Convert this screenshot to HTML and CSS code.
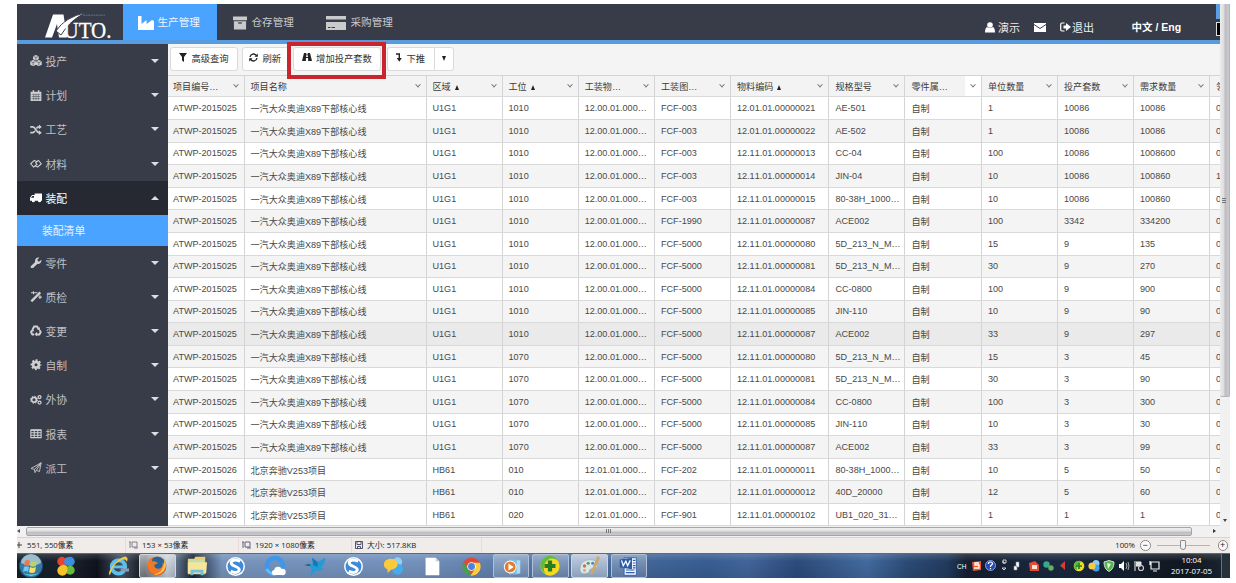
FILE: index.html
```html
<!DOCTYPE html>
<html lang="zh-CN">
<head>
<meta charset="utf-8">
<title>装配清单</title>
<link rel="stylesheet" href="styles.css">
</head>
<body>
<svg class="defs" width="0" height="0">
  <defs>
    <symbol id="i-cubes" viewBox="0 0 16 16"><path fill="currentColor" d="M7.800 0l4 1.600v4.400l-4 1.700-4-1.700V1.600z"/><path fill="currentColor" d="M4 7l4 1.700v4.800l-4 2-4-2V8.700zM12 7l4 1.700v4.800l-4 2-4-2V8.700z"/><path d="M4.300 2L7.800 3.400 11.300 2M7.800 3.400v3.400M.6 9.100L4 10.500l3.600-1.400M4 10.500v4.300M8.400 9.100L12 10.500l3.600-1.400M12 10.500v4.300" stroke="#383c49" stroke-width=".8" fill="none"/></symbol>
    <symbol id="i-cal" viewBox="0 0 16 16"><path fill="currentColor" d="M.5 2.500h2.800V.5h2.200v2h5V.5h2.200v2h2.800V15.500H.5z"/><path d="M2 6h12M2 9h12M2 12h12M4.800 6v8.500M8 6v8.500M11.200 6v8.500" stroke="#383c49" stroke-width=".7"/></symbol>
    <symbol id="i-random" viewBox="0 0 16 16"><path d="M0 4h3.500c3.500 0 5 8 8.500 8h1M0 12h3.500c1.300 0 2.200-1.200 3-2.500M8.500 6.300C9.400 5 10.400 4 12 4h1" stroke="currentColor" stroke-width="2.300" fill="none"/><path fill="currentColor" d="M12 .6L16 4l-4 3.400zM12 8.600L16 12l-4 3.400z"/></symbol>
    <symbol id="i-link" viewBox="0 0 18 16"><path d="M10.500 5L6.500 3 1 8l4.500 5 4-3.500M7.500 11l4 2L17 8l-4.500-5-4 3.500L11 10" stroke="currentColor" stroke-width="1.600" fill="none" stroke-linejoin="round"/></symbol>
    <symbol id="i-truck" viewBox="0 0 18 16"><path fill="currentColor" d="M7 1.500h11v11h-1.500a2.300 2.300 0 0 1-4.500 0H7.300a2.300 2.300 0 0 1-4.500 0H0V8l3-4h4z"/><path fill="#262931" d="M1.500 8L3.700 5.300H6V8z"/><circle cx="5" cy="13" r="1.900" fill="currentColor"/><circle cx="14.300" cy="13" r="1.900" fill="currentColor"/></symbol>
    <symbol id="i-wrench" viewBox="0 0 16 16"><path fill="currentColor" d="M.8 12.800l6-6C6 4 8 1 11.200.8l1.500.3L10 3.500l.4 2.300 2.300.6 2.700-2.600c.8 3.200-2 6.800-5.600 6l-6 5.600C2 16.500-.5 14.500.8 12.800z"/></symbol>
    <symbol id="i-magic" viewBox="0 0 16 16"><path d="M1.500 14.500L14 2" stroke="currentColor" stroke-width="3.200"/><path d="M1 2.500h7M4.500.5v4M13.500 6v5M11.500 8.500H16M8 2.500h2" stroke="currentColor" stroke-width="1.500"/></symbol>
    <symbol id="i-recycle" viewBox="0 0 16 16"><path d="M3.300 6L5.500 2h4l1.600 2.500M13.300 7l1.200 3-1.800 3.200H9M5.500 13.200H3L1.200 10l1.200-2.200" stroke="currentColor" stroke-width="2.700" fill="none"/><path fill="currentColor" d="M8.500 5.500L13.500 3v4.500zM9.500 9.500v6.500L6 13zM0 7.500l4-2.300 1.500 4z"/></symbol>
    <symbol id="i-cog" viewBox="0 0 16 16"><circle cx="8" cy="8" r="4" fill="none" stroke="currentColor" stroke-width="3.800"/><circle cx="8" cy="8" r="6.400" fill="none" stroke="currentColor" stroke-width="2.400" stroke-dasharray="2.700 2.330" stroke-dashoffset="1.350"/></symbol>
    <symbol id="i-cogs" viewBox="0 0 18 16"><circle cx="6" cy="8" r="3.600" fill="none" stroke="currentColor" stroke-width="2.600"/><circle cx="6" cy="8" r="5.300" fill="none" stroke="currentColor" stroke-width="1.500" stroke-dasharray="2.100 2.060"/><circle cx="14.300" cy="4" r="2.200" fill="none" stroke="currentColor" stroke-width="1.900"/><circle cx="14.300" cy="12.300" r="2.200" fill="none" stroke="currentColor" stroke-width="1.900"/></symbol>
    <symbol id="i-table" viewBox="0 0 17 16"><path d="M1.200 3h14.600v10.500H1.200zM1 6.500h15M1 10h15M6 3v11M11 3v11" fill="none" stroke="currentColor" stroke-width="1.500"/><path d="M1 2.800h15" stroke="currentColor" stroke-width="2"/></symbol>
    <symbol id="i-plane" viewBox="0 0 16 16"><path d="M1 9L15.200 1l-2.400 12.300-4.300-1.800-2 3.300-.7-4.500zM5.800 10.300L15 1.200M8.500 11.500L15 1.500" fill="none" stroke="currentColor" stroke-width="1.200" stroke-linejoin="round"/></symbol>
    <symbol id="s-orb" viewBox="0 0 26 26"><circle cx="13" cy="13" r="12" fill="#1f4f7c"/><circle cx="13" cy="13" r="11" fill="#347aa3"/><path d="M3 10a10 9 0 0 1 20 0q-9 5-20 0z" fill="#9dbdcb"/><path d="M7 8q3-2 5 0l-1 5q-3-1.500-5 0z" fill="#ef7650"/><path d="M13 8q3 2 6 0l-1 5q-3 1.500-6 0z" fill="#b8d660"/><path d="M6 14q3-1.500 5 0l-1 5q-2-2-5 0z" fill="#76c7ef"/><path d="M12 14q3 1.500 6 0l-1 5q-3 2-6 0z" fill="#ffdb68"/><path d="M5 20q8 6 16 0-8 3-16 0" fill="#63d6e8"/></symbol>
    <symbol id="s-pin" viewBox="0 0 24 24"><circle cx="7.500" cy="7" r="5" fill="#e8432e"/><circle cx="16.500" cy="7" r="5" fill="#3d8de0"/><circle cx="8" cy="17" r="5.500" fill="#f5c42c"/><circle cx="16.500" cy="16.500" r="5" fill="#67bb3a"/><path d="M16 3q-6-2-6 5 0 3 4 4" fill="#3d8de0"/><path d="M8 21q8-1 5-9-3-2-6-1" fill="#f5c42c"/></symbol>
    <symbol id="s-ie" viewBox="0 0 24 24"><circle cx="12.500" cy="13" r="7.300" fill="none" stroke="#5ac0ee" stroke-width="4.200"/><path d="M6 13h14" stroke="#5ac0ee" stroke-width="3.200"/><path d="M15 14.700h9v3.400h-9z" fill="#8a9aad"/><path d="M3 22C-1 18 13 2 20 1.500q4 1 1.500 6Q21 3.500 15 6 7 10 4.500 19z" fill="#f1cd4b"/></symbol>
    <symbol id="s-ff" viewBox="0 0 24 24"><circle cx="12" cy="12" r="10.300" fill="#db521e"/><circle cx="13" cy="9" r="7" fill="#21659c"/><path d="M2 8q2-4 4-5l1 4q4-1 6 2l-4 2q0 4 5 4 5-1 4-7 4 4 1 9-4 6-10 4Q1 19 2 8" fill="#ef7829"/><path d="M20 5q4 7-1 13-5 5-11 3 11 0 12-16" fill="#f9c149"/></symbol>
    <symbol id="s-folder" viewBox="0 0 24 24"><path d="M2 4h7l1-2h11v19H2z" fill="#e9ce74"/><path d="M4 5h16v4H4z" fill="#c5dcaa"/><path d="M2 8h21l-1 12H2z" fill="#f5e49c"/><path d="M5 22v-6h14v6h-3v-3H8v3z" fill="#6fc0dc"/></symbol>
    <symbol id="s-s" viewBox="0 0 24 24"><circle cx="12" cy="12" r="9.800" fill="#fff"/><circle cx="12" cy="12" r="8.300" fill="#3d8bd9"/><path d="M17 6.500Q8 3.500 7.500 8.300C7.300 12 16.500 11.500 16 15.700Q14.500 20 7 17" fill="none" stroke="#fff" stroke-width="3"/></symbol>
    <symbol id="s-q" viewBox="0 0 24 24"><circle cx="12" cy="12" r="8" fill="none" stroke="#3e97e8" stroke-width="4.500"/><path d="M3.500 15q4 6 9 5" stroke="#62bcf6" stroke-width="3" fill="none"/><circle cx="15" cy="16.500" r="3.800" fill="#fff"/><circle cx="19.500" cy="18" r="3.200" fill="#fff"/><circle cx="11.500" cy="18.500" r="2.600" fill="#fff"/><path d="M11 17h9v4.100h-8.500z" fill="#fff"/></symbol>
    <symbol id="s-bird" viewBox="0 0 24 24"><path d="M2 11q3-3 6-1l2 0L9 3l6 5 8-5q0 8-5 11l4 1q-6 4-9 2-2 4-7 6 3-4 2-8-1-4-6-4z" fill="#249bd3"/><path d="M9 3l6 5 0 5-5-2z" fill="#1579b9"/><path d="M0 11l6-1 1 2z" fill="#45413c"/></symbol>
    <symbol id="s-bub" viewBox="0 0 24 24"><circle cx="17" cy="7.500" r="5" fill="#8ed0f8"/><circle cx="17" cy="15.500" r="6" fill="#45aaf0"/><path d="M2 10a7.500 6 0 1 1 8 6l-4 3.500v-4q-4-1.500-4-5.500" fill="#fbc93c"/></symbol>
    <symbol id="s-doc" viewBox="0 0 24 24"><path d="M5 3h11l4 4v15H5z" fill="#fff"/><path d="M16 3v4h4" fill="#ccd6e1"/></symbol>
    <symbol id="s-chrome" viewBox="0 0 24 24"><circle cx="12" cy="12" r="9.500" fill="#e0483b"/><path d="M3.700 7.300L12 21.500A9.500 9.500 0 0 1 3.700 7.300" fill="#3ca454"/><path d="M11 21.500A9.500 9.500 0 0 0 20.600 8H12l4 6z" fill="#fbce3d"/><circle cx="12" cy="12" r="4.500" fill="#fff"/><circle cx="12" cy="12" r="3.600" fill="#4586d6"/></symbol>
    <symbol id="s-play" viewBox="0 0 24 24"><path d="M9 4h11v17H9z" fill="#7bc0e7"/><path d="M18 5h4v15h-4" fill="#b2dcef"/><circle cx="10.500" cy="12.500" r="7.300" fill="#fff"/><circle cx="10.500" cy="12.500" r="6.200" fill="#e77a2d"/><path d="M8.500 8.500l6 4-6 4z" fill="#fff"/></symbol>
    <symbol id="s-plus" viewBox="0 0 24 24"><circle cx="12" cy="12" r="10.500" fill="#f5d91f"/><path d="M1.500 12A10.500 10.500 0 0 1 21 6Q11 0 6 10q-2 6 1 11-5-4-5.500-9" fill="#5ebd3c"/><path d="M9.700 6h4.600v3.700H18v4.600h-3.700V18H9.700v-3.700H6V9.700h3.700z" fill="#257d27"/></symbol>
    <symbol id="s-paint" viewBox="0 0 24 24"><path d="M1 16Q1 5 13 5q8 1 7 7-1 4-6 3-3 0-3 4-9 4-10-3" fill="#d9e7eb" stroke="#8ba3b4" stroke-width=".6"/><circle cx="6" cy="12" r="1.800" fill="#dc6650"/><circle cx="10" cy="9" r="1.700" fill="#55a05c"/><circle cx="15" cy="9" r="1.700" fill="#4e86cc"/><circle cx="6" cy="17" r="1.600" fill="#e2b03c"/><path d="M20 1l3 2-8 18h-3z" fill="#d0a668"/></symbol>
    <symbol id="s-word" viewBox="0 0 24 24"><path d="M7 2h14v20H7z" fill="#f5f9ff" stroke="#345ca7" stroke-width="1"/><path d="M9 16h10M9 19h10M17 5h3M17 8h3M17 11h3M17 13.500h3" stroke="#345ca7" stroke-width="1.300"/><path d="M2 4l14-2v13L2 13z" fill="#2d5da7"/><path d="M4 5l2 6 3-5 2 5 3-6" stroke="#fff" stroke-width="1.500" fill="none"/></symbol>
  </defs>
</svg>

<div class="screen">
  <div class="viewer">
    <div class="app">
      <header class="topbar">
        <div class="logo">
          <svg width="70" height="30" viewBox="0 0 70 30">
            <path d="M8 3.500h10.500l3.500 23h-8L12 13 7 26.500H0z" fill="#fff"/>
            <path d="M11 20Q20 6 41 1.600 25 9 16 24z" fill="#fff" stroke="#383c49" stroke-width="1"/>
            <path d="M38 4.200h22" stroke="#4b7c99" stroke-width="1" stroke-dasharray="2 .6"/>
            <text x="18.500" y="26.500" class="logo-text" textLength="48" lengthAdjust="spacingAndGlyphs">UTO.</text>
          </svg>
        </div>
        <nav class="tabs">
          <div class="tab tab-on"><svg width="16" height="14" viewBox="0 0 16 14"><path fill="#fff" d="M0 0h3.500v8L8.500 4v4L14 4l2 1v9H0z"/></svg><span>生产管理</span></div>
          <div class="tab tab-store"><svg width="14" height="14" viewBox="0 0 15 14"><path fill="#c9cacc" d="M0 0h15v4H0zM1 5h13v9H1z"/><path d="M5.500 7h4" stroke="#383c49" stroke-width="1.300"/></svg><span>仓存管理</span></div>
          <div class="tab tab-buy"><svg width="20" height="14" viewBox="0 0 20 14"><path fill="#c9cacc" d="M0 0h20v3.500H0zM0 6h20v8H0z"/><path d="M2 11.500h2.500M5.500 11.500H9" stroke="#383c49"/></svg><span>采购管理</span></div>
        </nav>
        <div class="user">
          <svg width="10" height="11" viewBox="0 0 10 11"><circle cx="5" cy="3" r="2.800" fill="#fff"/><path fill="#fff" d="M2 5q3 2 6 0 2 1 2 5.500H0Q0 6 2 5z"/></svg><span class="who">演示</span>
          <svg class="mail" width="12" height="9" viewBox="0 0 12 9"><path fill="#fff" d="M0 0h12v9H0z"/><path d="M0 1.500l6 4 6-4" fill="none" stroke="#383c49"/></svg>
          <svg class="exit" width="11" height="10" viewBox="0 0 11 10"><path d="M4.500 1H2Q.7 1 .7 2.500v5Q.7 9 2 9h2.500" fill="none" stroke="#fff" stroke-width="1.200"/><path fill="#fff" d="M3.500 3.500H6V1l5 4-5 4V6.500H3.500z"/></svg><span>退出</span>
          <b class="lang">中文 / Eng</b>
          <div class="edge"><i class="edge-blue"></i><i class="edge-box"></i></div>
        </div>
      </header>
      <div class="main">
        <aside class="side" id="side"></aside>
        <section class="content">
          <div class="toolbar">
            <div class="btn b1"><svg width="8" height="9" viewBox="0 0 8 9"><path fill="#222" d="M0 0h8L5 4v5L3 7.500V4z"/></svg><span>高级查询</span></div>
            <div class="btn b2"><svg width="9" height="9" viewBox="0 0 9 9"><path d="M1 4a3.500 3.500 0 0 1 6.300-1.500M8 5a3.500 3.500 0 0 1-6.300 1.500" fill="none" stroke="#222" stroke-width="1.300"/><path d="M8.800.4v3.400H5.500zM.2 8.600V5.200h3.300z" fill="#222"/></svg><span>刷新</span></div>
            <div class="btn b3"><svg width="10" height="8" viewBox="0 0 10 8"><path fill="#222" d="M2 0h2.300l-.1 1.500h1.600L5.700 0H8l2 8H6.200L6 5H4l-.2 3H0zM4.200 2.200L4.100 4h1.800l-.1-1.800z"/></svg><span>增加投产套数</span><i class="mark"></i></div>
            <div class="btn b4"><svg width="6" height="9" viewBox="0 0 6 9"><path d="M0 1h3.300v5" stroke="#222" stroke-width="1.400" fill="none"/><path d="M.8 5h5L3.300 8.800z" fill="#222"/></svg><span>下推</span></div>
            <div class="btn b5"><i class="caret"></i></div>
          </div>
          <div class="grid" id="grid"></div>
        </section>
      </div>
    </div>
    <div class="vbar">
      <div class="vthumb"><i></i><i></i><i></i></div>
      <i class="vdown"></i>
    </div>
  </div>
  <div class="hbar"><i class="hleft"></i><div class="hthumb"><i></i><i></i><i></i></div><i class="hright"></i></div>
  <div class="status">
    <div class="st st1"><svg width="7" height="8" viewBox="0 0 7 8"><path d="M0 4h5M2 1v6" stroke="#444"/></svg><span>551, 550像素</span></div>
    <div class="st st2"><svg width="9" height="8" viewBox="0 0 9 8"><path d="M0 1h2M1 1v6M3 1h5v5H3zM5 7h4" stroke="#667" stroke-width=".8" fill="none"/></svg><span>153 × 53像素</span></div>
    <div class="st st3"><svg width="9" height="8" viewBox="0 0 9 8"><path d="M0 1h2M1 1v6M3 1h5v5H3zM5 7h4" stroke="#446" stroke-width=".8" fill="none"/></svg><span>1920 × 1080像素</span></div>
    <div class="st st4"><svg width="8" height="8" viewBox="0 0 8 8"><path d="M.5.500h7v7h-7zM2 .5h4v3H2zM2.500 7.500v-2h3v2" stroke="#446" stroke-width=".9" fill="none"/></svg><span>大小: 517.8KB</span></div>
    <div class="zoom"><span>100%</span><i class="zb">−</i><div class="track"><i></i></div><i class="zb">+</i></div>
  </div>
  <div class="taskbar">
    <div class="pin"><svg width="26" height="26"><use href="#s-orb"/></svg></div>
    <div class="pin pin2"><svg width="22" height="22"><use href="#s-pin"/></svg></div>
    <div class="apps">
      <div class="slot"><svg width="22" height="22"><use href="#s-ie"/></svg></div>
      <div class="slot"><div class="run"><svg width="22" height="22"><use href="#s-ff"/></svg></div></div>
      <div class="slot"><svg width="22" height="22"><use href="#s-folder"/></svg></div>
      <div class="slot"><svg width="23" height="23"><use href="#s-s"/></svg></div>
      <div class="slot"><svg width="24" height="24"><use href="#s-q"/></svg></div>
      <div class="slot"><svg width="22" height="22"><use href="#s-bird"/></svg></div>
      <div class="slot"><svg width="23" height="23"><use href="#s-s"/></svg></div>
      <div class="slot"><svg width="22" height="22"><use href="#s-bub"/></svg></div>
      <div class="slot"><svg width="22" height="22"><use href="#s-doc"/></svg></div>
      <div class="slot"><svg width="23" height="23"><use href="#s-chrome"/></svg></div>
      <div class="slot"><div class="run dim"><svg width="21" height="21"><use href="#s-play"/></svg></div></div>
      <div class="slot"><div class="run dim"><svg width="22" height="22"><use href="#s-plus"/></svg></div></div>
      <div class="slot"><div class="run"><svg width="22" height="22"><use href="#s-paint"/></svg></div></div>
      <div class="slot"><div class="run dim"><svg width="21" height="21"><use href="#s-word"/></svg></div></div>
    </div>
    <div class="tray">
      <span class="ch">CH</span>
      <svg width="190" height="16" viewBox="0 0 190 16">
        <path d="M1 4l9-1 0 9-8 1z" fill="#ee5928"/><path d="M8 5H4l0 2h4v3H3" stroke="#fff" stroke-width="1.300" fill="none"/>
        <circle cx="19.500" cy="7.500" r="5" fill="#2448bd" stroke="#a3bce9" stroke-width=".8"/><path d="M17.500 6q0-2 2-2t2 2l-2 2v1M19.500 10v1.300" stroke="#fff" stroke-width="1.200" fill="none"/>
        <path d="M32 2h3v3h-3zM31 4h2v2M31 10h4l-2 2z" fill="none" stroke="#ddd" stroke-width=".9"/>
        <path d="M43 8h3v4h-3zM45 4h3v5h-3z" fill="#fff" stroke="#889" stroke-width=".6"/>
        <path d="M58 5l6-2 4 4v6h-9z" fill="#e94a37"/><path d="M61 7h5v4h-5z" fill="#ffe3cf"/>
        <circle cx="75.500" cy="6.500" r="3.200" fill="#3aa68a"/><circle cx="80" cy="10" r="2.700" fill="#6aae65"/>
        <path d="M94 3v9l-5-4.500z" fill="#dd3931"/>
        <circle cx="108" cy="8" r="5.300" fill="#eedb25"/><path d="M103 8a5 5 0 0 1 8-4q-5 0-5 8-3-1-3-4" fill="#55b93f"/><path d="M108 5v6M105 8h6" stroke="#287c29" stroke-width="1.700"/>
        <circle cx="125" cy="5.500" r="3.500" fill="#8bcbf5"/><circle cx="125" cy="10" r="3.500" fill="#40a1e8"/><circle cx="121" cy="8" r="3.600" fill="#f4ca49"/>
        <path d="M138 2.500l5 1.500q0 7-5 9.500-5-2.500-5-9.500z" fill="#54b54d" stroke="#cce3d0"/><path d="M136 5l4 1-3 5z" fill="#e7f3d8"/>
        <path d="M148 6h2l3-3v10l-3-3h-2z" fill="#fff"/><path d="M155 5q2 3 0 6M157 4q2 4 0 8" stroke="#bbb" fill="none" stroke-width=".9"/>
        <path d="M164 3v10M165 4h5v4h-5" stroke="#eee" fill="#ddd"/><circle cx="170" cy="10" r="2.500" fill="none" stroke="#ccc" stroke-width="1.200"/>
        <path d="M180 4h8v7h-8zM179 3v4M182 13h4" fill="none" stroke="#eee" stroke-width="1.200"/>
      </svg>
      <div class="clock"><span>10:04</span><span>2017-07-05</span></div>
      <i class="desk"></i>
    </div>
  </div>
</div>
<script src="app.js"></script>
</body>
</html>
```

FILE: styles.css
```css
* { box-sizing: border-box; }
body { margin: 0; background: #fff; font-family: "Liberation Sans", "Noto Sans CJK SC", sans-serif; color: #484848; }
.defs { position: absolute; }
svg { flex: none; display: block; }
.screen { width: 1236px; height: 583px; padding: 4px 6px 0 17px; overflow: hidden; display: flex; flex-direction: column; }
.viewer { display: flex; height: 522px; flex: none; }
.app { width: 1202.500px; overflow: hidden; display: flex; flex-direction: column; }

.topbar { height: 40px; flex: none; display: flex; background: #383c49; border-bottom: 4px solid #579cde; }
.logo { width: 105.500px; padding: 7px 0 0 28px; }
.logo-text { font-family: "Liberation Serif", serif; font-size: 24px; fill: #fff; stroke: #fff; stroke-width: .3px; }
.tabs { display: flex; color: #c9cacc; font-size: 10.600px; }
.tab { display: flex; align-items: center; gap: 4px; height: 36px; padding-bottom: 2px; }
.tab svg { margin-top: 3px; }
.tab-on { width: 94.500px; padding-left: 15px; background: #4aa3ff; color: #eef6ff; }
.tab-store { width: 93.500px; padding-left: 15.500px; gap: 5px; }
.tab-buy { padding-left: 15.500px; gap: 4.500px; }
.user { margin-left: auto; width: 234.500px; display: flex; align-items: center; padding-top: 9px; font-size: 11px; color: #eee; position: relative; white-space: nowrap; }
.user svg { margin-top: 1px; }
.who { margin: 0 14px 0 3px; }
.user .exit { margin: 0 1px 0 14px; }
.lang { margin-left: 37.500px; color: #fff; font-size: 10.500px; }
.edge { position: absolute; right: 0; top: 0; width: 4px; height: 36px; display: flex; flex-direction: column; }
.edge-blue { height: 14.500px; background: #5a9ee4; margin-bottom: 3px; }
.edge-box { height: 14px; background: #000; border: 1px solid #ddd; border-right: 0; }

.main { display: flex; flex: 1; min-height: 0; }
.side { width: 150.500px; flex: none; background: #383c49; color: #bfc0c4; font-size: 10.800px; }
.item { height: 34.200px; display: flex; align-items: center; padding: 0 8.500px 0 13px; }
.item svg { width: 12px; height: 11.500px; margin-right: 3.500px; color: #cfd0d2; }
.item::after { content: ""; margin-left: auto; border: 4px solid transparent; border-top-color: #dcdde0; border-bottom: 0; }
.item.open { background: #262931; color: #fff; }
.item.open svg { color: #fff; }
.item.open::after { border-top: 0; border-bottom: 4px solid #dcdde0; }
.sub { height: 30.600px; display: flex; align-items: center; padding-left: 25px; background: #4aa3ff; color: #e6f2ff; }

.content { flex: 1; min-width: 0; background: #f4f4f4; }
.toolbar { height: 30.700px; display: flex; align-items: flex-start; padding: 2.500px 0 0 2.500px; }
.btn { height: 24px; display: flex; align-items: center; justify-content: center; gap: 4.500px; background: #fff; border: 1px solid #dadada; border-radius: 3px; font-size: 9.300px; color: #333; white-space: nowrap; }
.b1 { width: 67.500px; margin-right: 4px; }
.b2 { width: 47px; margin-right: 4.500px; }
.b3 { width: 87.500px; position: relative; margin-right: 6px; }
.b4 { width: 47px; border-radius: 3px 0 0 3px; border-right: 0; }
.b5 { width: 20.500px; border-radius: 0 3px 3px 0; }
.btn svg { margin-top: -3px; }
.btn span { margin-top: -1px; }
.caret { border: 2.500px solid transparent; border-top: 5px solid #222; border-bottom: 0; }
.mark { position: absolute; left: -7.500px; top: -5.500px; width: 99.500px; height: 37px; border: 4px solid #c9252d; }

.grid { width: 1060px; border-top: 1px solid #d4d4d4; font-size: 9.080px; }
.row { display: grid; grid-template-columns: 77px 182px 76px 76.200px 76.300px 76px 98.500px 76px 76.500px 76px 76px 76px 60px; height: 22.580px; background: #fff; }
.row:nth-child(odd) { background: #f4f4f4; }
.row.hover { background: #eaeaea; }
.row.head { height: 21.800px; background: #f3f3f3; }
.cell { padding: 0 0 0 6px; border-right: 1px solid #d4d4d4; border-bottom: 1px solid #d9d9d9; display: flex; align-items: center; overflow: hidden; white-space: nowrap; font-kerning: none; }
.cell:first-child { padding-left: 5.500px; font-kerning: auto; }
.head .cell { color: #3c3c3c; justify-content: space-between; }
.chev { width: 4px; height: 4px; border: solid #777; border-width: 0 1px 1px 0; transform: rotate(45deg) translate(-1px, -1px); margin-right: 6px; flex: none; }
.chevbox { align-self: stretch; display: flex; align-items: center; }
.chevbox.lit { background: #fff; padding-left: 6px; }
.up { display: inline-block; border: 2.600px solid transparent; border-bottom: 5px solid #222; border-top: 0; margin-left: 4px; }

.vbar { width: 10px; height: 522px; background: #f1f1f1; position: relative; }
.vthumb { height: 393px; border: 1px solid #b5b5b8; border-width: 0 1px 1px 0; border-radius: 0 0 2px 2px; background: linear-gradient(90deg, #ececec, #dcdcde 45%, #bcbcc2 55%, #cacace); display: flex; flex-direction: column; align-items: center; justify-content: center; gap: 1px; }
.vthumb i { width: 4px; height: 1px; background: #777; }
.vdown { position: absolute; left: 3px; bottom: 4px; border: 2px solid transparent; border-top: 3px solid #444; border-bottom: 0; }
.hbar { height: 10.500px; flex: none; display: flex; align-items: center; background: #f1f1f1; width: 1212.500px; }
.hleft { width: 0; margin: 0 5.500px 0 0; border: 2px solid transparent; border-right: 3px solid #555; border-left: 0; }
.hthumb { width: 1166px; height: 9.500px; border: 1px solid #a5a5a8; border-radius: 2px; background: linear-gradient(#f0f0f0, #dedee0 45%, #bebec2 60%, #c9c9cc); display: flex; align-items: center; justify-content: center; gap: 1px; }
.hthumb i { width: 1px; height: 4px; background: #777; }
.hright { margin-left: 21px; border: 2px solid transparent; border-left: 3px solid #333; border-right: 0; }

.status { height: 16.500px; flex: none; display: flex; width: 1213px; background: #f0ecea; border-top: 1px solid #d8d4d4; font-family: "Open Sans", "Noto Sans CJK SC", sans-serif; font-size: 7.800px; color: #222; }
.st { display: flex; align-items: center; gap: 4px; border-right: 1px solid #ead9d8; white-space: nowrap; }
.st span { margin-top: -1px; }
.st1 { width: 109px; gap: 3px; }
.st2 { width: 113px; padding-left: 3px; }
.st3 { width: 113px; padding-left: 3px; }
.st4 { width: 129.500px; padding-left: 3px; }
.zoom { margin-left: auto; display: flex; align-items: center; gap: 5px; padding-right: 2px; }
.zb { width: 10.500px; height: 10.500px; border: 1px solid #8a8a8a; border-radius: 50%; font: 9px/8px "Liberation Sans", sans-serif; text-align: center; background: #fafafa; }
.track { width: 53px; height: 1px; background: #b4b4b4; display: flex; align-items: center; justify-content: center; margin: 0 3px 0 1px; }
.track i { width: 6px; height: 10px; border: 1px solid #8d8d8d; border-radius: 1px 1px 3px 3px; background: #f1f1f1; }

.taskbar { width: 1213px; height: 25px; flex: none; display: flex; border-top: 1px solid #596b83; background: linear-gradient(180deg, #ffffff26, #ffffff00 30%, #00000018), linear-gradient(90deg, #15202b 0, #18202c 58px, #0e121c 80px, #495363 105px, #0c121b 128px, #889db4 150px, #182437 176px, #7794bc 205px, #7391bc 400px, #5576a4 520px, #385d92 690px, #41649a 730px, #2c4b7b 780px, #426a9d 850px, #2b4b76 890px, #223b5e 930px, #141f31 950px, #1a2940 1040px, #101720 1170px, #1b2733 1213px); }
.pin { width: 27px; display: flex; align-items: center; justify-content: center; }
.pin2 { width: 44px; }
.apps { display: flex; margin-left: 10.400px; }
.slot { width: 39.300px; display: flex; align-items: center; justify-content: center; }
.run { width: 36.500px; height: 24px; display: flex; align-items: center; justify-content: center; border: 1px solid #cbd4df; border-radius: 2px; background: linear-gradient(#ffffffa0, #ffffff60); }
.run.dim { border-color: #aebfd6; background: linear-gradient(#ffffff55, #ffffff22); }
.tray { margin-left: auto; width: 273px; display: flex; align-items: center; color: #fff; font-family: "Open Sans", sans-serif; }
.ch { width: 14px; font: 6.500px "Liberation Sans", sans-serif; }
.clock { width: 51px; margin-left: 5px; display: flex; flex-direction: column; align-items: center; font-size: 7.900px; line-height: 11.200px; }
.desk { margin-left: auto; width: 9px; height: 24px; border-left: 1px solid #66717b; background: #26313b; }
```

FILE: app.js
```js
const menu = [
  ["cubes", "投产"], ["cal", "计划"], ["random", "工艺"], ["link", "材料"],
  ["truck", "装配", true], ["wrench", "零件"], ["magic", "质检"], ["recycle", "变更"],
  ["cog", "自制"], ["cogs", "外协"], ["table", "报表"], ["plane", "派工"]
];
document.getElementById("side").innerHTML = menu.map(([icon, label, open]) =>
  `<div class="item${open ? " open" : ""}"><svg><use href="#i-${icon}"/></svg><span>${label}</span></div>` +
  (open ? '<div class="sub">装配清单</div>' : "")
).join("");

const heads = ["项目编号…", "项目名称", "区域^", "工位^", "工装物…", "工装图…", "物料编码^", "规格型号", "零件属…", "单位数量", "投产套数", "需求数量", "领料"];
const A = "一汽大众奥迪X89下部核心线";
const B = "北京奔驰V253项目";
const rows = [
  ["25", A, "U1G1", "1010", "00", "FCF-003", "01.01.00000021", "AE-501", "1", "10086", "10086", "0"],
  ["25", A, "U1G1", "1010", "00", "FCF-003", "01.01.00000022", "AE-502", "1", "10086", "10086", "0"],
  ["25", A, "U1G1", "1010", "00", "FCF-003", "11.01.00000013", "CC-04", "100", "10086", "1008600", "0"],
  ["25", A, "U1G1", "1010", "00", "FCF-003", "11.01.00000014", "JIN-04", "10", "10086", "100860", "1"],
  ["25", A, "U1G1", "1010", "00", "FCF-003", "11.01.00000015", "80-38H_1000…", "10", "10086", "100860", "0"],
  ["25", A, "U1G1", "1010", "00", "FCF-1990", "11.01.00000087", "ACE002", "100", "3342", "334200", "0"],
  ["25", A, "U1G1", "1010", "00", "FCF-5000", "11.01.00000080", "5D_213_N_M…", "15", "9", "135", "0"],
  ["25", A, "U1G1", "1010", "00", "FCF-5000", "11.01.00000081", "5D_213_N_M…", "30", "9", "270", "0"],
  ["25", A, "U1G1", "1010", "00", "FCF-5000", "11.01.00000084", "CC-0800", "100", "9", "900", "0"],
  ["25", A, "U1G1", "1010", "00", "FCF-5000", "11.01.00000085", "JIN-110", "10", "9", "90", "0"],
  ["25", A, "U1G1", "1010", "00", "FCF-5000", "11.01.00000087", "ACE002", "33", "9", "297", "0"],
  ["25", A, "U1G1", "1070", "00", "FCF-5000", "11.01.00000080", "5D_213_N_M…", "15", "3", "45", "0"],
  ["25", A, "U1G1", "1070", "00", "FCF-5000", "11.01.00000081", "5D_213_N_M…", "30", "3", "90", "0"],
  ["25", A, "U1G1", "1070", "00", "FCF-5000", "11.01.00000084", "CC-0800", "100", "3", "300", "0"],
  ["25", A, "U1G1", "1070", "00", "FCF-5000", "11.01.00000085", "JIN-110", "10", "3", "30", "0"],
  ["25", A, "U1G1", "1070", "00", "FCF-5000", "11.01.00000087", "ACE002", "33", "3", "99", "0"],
  ["26", B, "HB61", "010", "01", "FCF-202", "11.01.00000011", "80-38H_1000…", "10", "5", "50", "0"],
  ["26", B, "HB61", "010", "01", "FCF-202", "11.01.00000012", "40D_20000", "12", "5", "60", "0"],
  ["26", B, "HB61", "020", "01", "FCF-901", "11.01.00000102", "UB1_020_31…", "1", "1", "1", "0"]
];
const head = heads.map((h, i) =>
  `<div class="cell"><span>${h.replace("^", '<i class="up"></i>')}</span><span class="chevbox${i === 8 ? " lit" : ""}"><i class="chev"></i></span></div>`
).join("");
const body = rows.map((r, n) => {
  const cells = ["ATWP-20150" + r[0], r[1], r[2], r[3], `12.${r[4]}.01.000…`, r[5], "12." + r[6], r[7], "自制", ...r.slice(8)];
  return `<div class="row${n === 10 ? " hover" : ""}">` + cells.map(c => `<div class="cell">${c}</div>`).join("") + "</div>";
}).join("");
document.getElementById("grid").innerHTML = `<div class="row head">${head}</div>${body}`;
```
